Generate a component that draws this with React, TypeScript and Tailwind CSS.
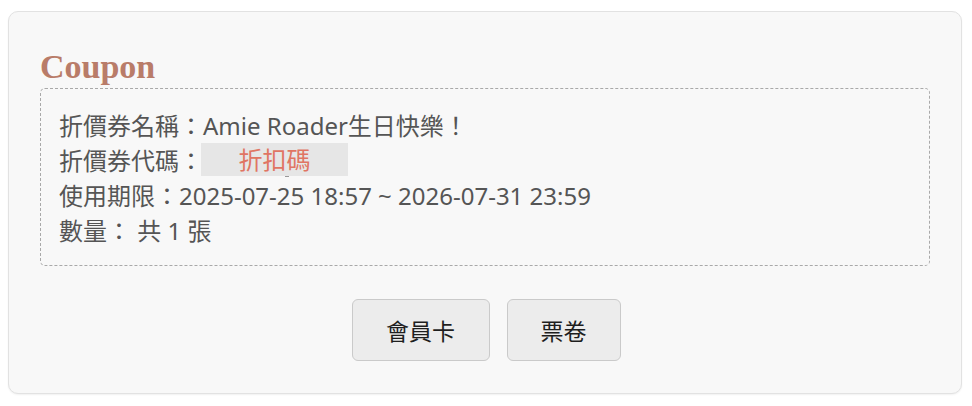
import React from "react";

export default function App() {
  const body = { fontFamily: '"Noto Sans", "Noto Sans CJK TC", sans-serif' };
  return (
    <div className="w-[972px] h-[406px] bg-white pt-[11px] pl-[8px]" style={body}>
      <div className="w-[954px] h-[383px] rounded-[10px] border border-[#e2e2e2] bg-[#f8f8f8] shadow-[0_1px_2px_rgba(0,0,0,0.06)] px-[31px] pt-[37px]">
        <h2
          className="text-[34px] leading-[36px] font-bold text-[#b97c69] mb-[3px]"
          style={{ fontFamily: '"Liberation Serif", serif' }}
        >
          Coupon
        </h2>
        <div className="rounded-[5px] border border-dashed border-[#a9a9a9] pl-[18px] pt-[19px] pb-[17px] text-[24px] leading-[35px] text-[#555555]">
          <div>折價券名稱：Amie Roader生日快樂！</div>
          <div className="flex items-center">
            <span>折價券代碼：</span>
            <span className="relative -ml-[2px] inline-block w-[147px] h-[33px] leading-[33px] bg-[#e6e6e6] text-center text-[#e07563] -mt-[3px]">
              折扣碼
              <span className="absolute left-[84px] top-[33px] w-[4px] h-[1px] bg-[#999]" />
            </span>
          </div>
          <div>使用期限：2025-07-25 18:57 ~ 2026-07-31 23:59</div>
          <div>數量： 共 1 張</div>
        </div>
        <div className="flex justify-center gap-[17px] mt-[33px] pl-[2px]">
          <button
            className="h-[62px] w-[138px] rounded-[6px] border border-[#cacaca] bg-[#ececec] text-[23px] text-[#1e1e1e]"
            style={{ fontFamily: '"Noto Sans CJK TC", sans-serif' }}
          >
            會員卡
          </button>
          <button
            className="h-[62px] w-[114px] rounded-[6px] border border-[#cacaca] bg-[#ececec] text-[23px] text-[#1e1e1e]"
            style={{ fontFamily: '"Noto Sans CJK TC", sans-serif' }}
          >
            票卷
          </button>
        </div>
      </div>
    </div>
  );
}
